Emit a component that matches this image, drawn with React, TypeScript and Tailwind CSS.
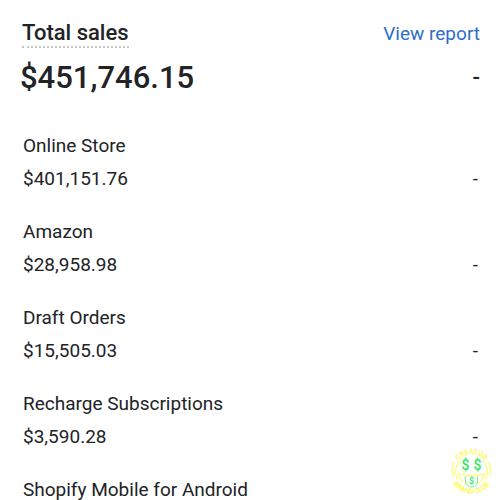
interface Channel {
    name: string;
    amount?: string;
    change?: string;
}

const channels: Channel[] = [
    { name: "Online Store", amount: "$401,151.76", change: "-" },
    { name: "Amazon", amount: "$28,958.98", change: "-" },
    { name: "Draft Orders", amount: "$15,505.03", change: "-" },
    { name: "Recharge Subscriptions", amount: "$3,590.28", change: "-" },
    { name: "Shopify Mobile for Android" },
];

function CreatorBadge() {
    return (
        <svg viewBox="0 0 44 48" className="absolute right-1.5 bottom-1 h-12 w-11" role="img" aria-label="Creator Brand Club">
            <defs>
                <path id="badge-top" d="M4 23.5a17.5 17.5 0 0 1 35 0" />
                <path id="badge-bottom" d="M-1 23a22.5 22.5 0 0 0 45 0" />
            </defs>
            <g fill="none" stroke="#ffff4a" strokeLinecap="round">
                <path d="M3.8 14a20 20 0 0 0-.5 14" />
                <path d="M39.2 14a20 20 0 0 1 .5 14" />
                <path d="M7.5 31a16 16 0 0 1 3-19.5" />
                <path d="M35.5 31a16 16 0 0 0-3-19.5" />
                <path d="M8.5 25.5q13 4.5 26 0q-1.5 8-7 10" />
                <path d="M8.5 25.5q1.5 8 7 10" />
            </g>
            <g fill="#fff833" fontSize="7" fontWeight="500" textAnchor="middle">
                <text>
                    <textPath href="#badge-top" startOffset="50%">CREATOR</textPath>
                </text>
                <text>
                    <textPath href="#badge-bottom" startOffset="50%">BRAND CLUB</textPath>
                </text>
            </g>
            <path d="M15.5 28.5v4.5a6 6 0 0 0 12 0v-4.5" fill="none" stroke="#6cf58f" />
            <g fill="#2bea5b" fontWeight="500" textAnchor="middle">
                <text x="15.5" y="22" fontSize="14">$</text>
                <text x="27.5" y="22" fontSize="14">$</text>
                <text x="21.5" y="36" fontSize="9">$</text>
            </g>
        </svg>
    );
}

export default function App() {
    return (
        <main className="relative h-screen overflow-hidden bg-white pt-[19px] font-[Roboto,sans-serif] text-[#212326]">
            <header className="flex items-start justify-between pr-5 pl-[22px]">
                <h1 className="border-b-2 border-dotted border-[#c4c6c8] text-[22px] leading-[27px] font-medium">Total sales</h1>
                <a href="#report" className="text-[19px] leading-[29px] text-[#2c6ecb]">
                    View report
                </a>
            </header>
            <div className="mt-[9px] flex items-center justify-between pr-5 pl-5 text-[31px] leading-[42px] font-medium">
                <span>$451,746.15</span>
                <span className="text-[22px]">-</span>
            </div>
            <ul className="mt-[30px] space-y-5 pr-[22px] pl-[23px] text-[19px] leading-[33px]">
                {channels.map((channel) => (
                    <li key={channel.name}>
                        <h2>{channel.name}</h2>
                        {channel.amount && (
                            <div className="flex justify-between">
                                <span>{channel.amount}</span>
                                <span>{channel.change}</span>
                            </div>
                        )}
                    </li>
                ))}
            </ul>
            <CreatorBadge />
        </main>
    );
}
